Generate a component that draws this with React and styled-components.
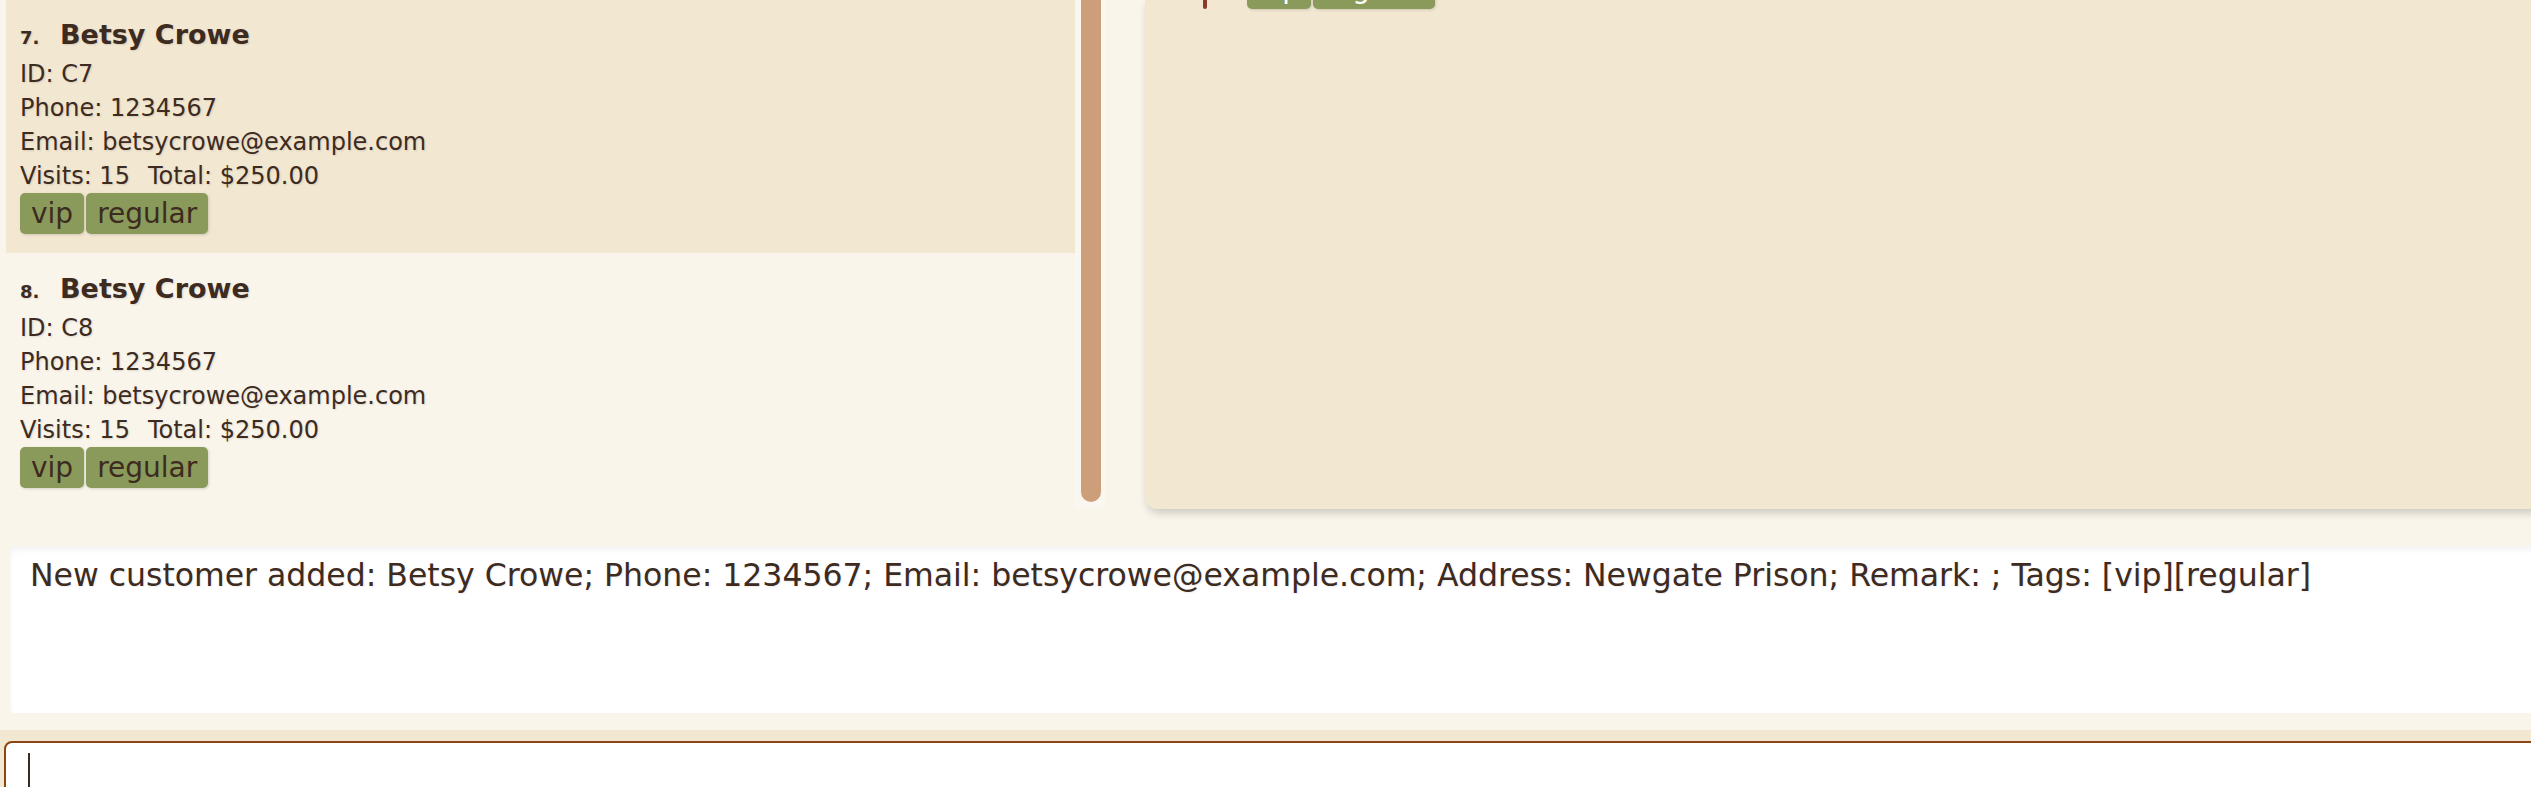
import React from "react";
import styled, { createGlobalStyle } from "styled-components";

const GlobalStyle = createGlobalStyle`
  html, body {
    margin: 0;
    padding: 0;
    background: #f9f5eb;
    overflow: hidden;
  }
  body {
    font-family: "DejaVu Sans", Lato, sans-serif;
    color: #3d2b1f;
  }
`;

const Window = styled.div`
  width: 2531px;
  height: 787px;
  display: flex;
  flex-direction: column;
  overflow: hidden;
  & > * {
    flex-shrink: 0;
  }
`;

const Main = styled.div`
  height: 509px;
  display: flex;
  gap: 40px;
  padding-left: 6px;
`;

const ListPanel = styled.div`
  width: 1099px;
  display: flex;
  flex-shrink: 0;
  overflow: hidden;
`;

const CardList = styled.div`
  width: 1069px;
  display: flex;
  flex-direction: column;
  margin-top: -1px;
`;

const Card = styled.div`
  height: 254px;
  box-sizing: border-box;
  padding: 20px 14px 20px 14px;
  background: ${(p) => (p.$odd ? "#f2e7d1" : "#f9f5eb")};
  display: flex;
  flex-direction: column;
  flex-shrink: 0;
  text-shadow: 1px 1px 2px rgba(0, 0, 0, 0.12);
`;

const Title = styled.div`
  display: flex;
  align-items: baseline;
  line-height: 32px;
  margin-bottom: 3px;
`;

const Index = styled.span`
  font-size: 18px;
  font-weight: 700;
  width: 40px;
`;

const Name = styled.span`
  font-size: 27px;
  font-weight: 700;
`;

const Line = styled.div`
  font-size: 24px;
  line-height: 34px;
  white-space: nowrap;
`;

const Gap = styled.span`
  margin-left: 18px;
`;

const Tags = styled.div`
  display: flex;
  gap: 2px;
`;

const Tag = styled.span`
  height: 41px;
  line-height: 41px;
  padding: 0 11px;
  font-size: 28px;
  border-radius: 5px;
  background: #8a9a5b;
  color: ${(p) => (p.$light ? "#ffffff" : "#3d2b1f")};
  box-shadow: 1px 1px 3px rgba(0, 0, 0, 0.15);
  text-shadow: none;
`;

const Track = styled.div`
  width: 30px;
  height: 509px;
  background: #faf7f0;
  padding-left: 6px;
  box-sizing: border-box;
`;

const Thumb = styled.div`
  width: 20px;
  height: 502px;
  background: #cc9e7a;
  border-radius: 0 0 10px 10px;
`;

const DetailPanel = styled.div`
  flex: 1;
  margin-right: -20px;
  background: #f2e7d1;
  border-radius: 0 0 0 12px;
  box-shadow: 2px 4px 8px rgba(0, 0, 0, 0.18);
  overflow: hidden;
`;

const DetailTags = styled.div`
  display: flex;
  align-items: flex-end;
  gap: 2px;
  margin-top: -32px;
  padding-left: 58px;
`;

const Marker = styled.span`
  width: 4px;
  height: 34px;
  margin-right: 38px;
  border-radius: 2px;
  background: #8b3a2a;
`;

const ResultBox = styled.div`
  margin: 37px -10px 0 10px;
  height: 167px;
  background: #ffffff;
  border-radius: 4px;
  box-shadow: inset 0 4px 6px rgba(0, 0, 0, 0.05);
  padding: 8px 20px;
  box-sizing: border-box;
  font-size: 31.5px;
  line-height: 42px;
  white-space: nowrap;
  text-shadow: 1px 1px 2px rgba(0, 0, 0, 0.08);
`;

const CommandBar = styled.div`
  margin-top: 17px;
  height: 80px;
  background: #f2e7d1;
  padding: 11px 0 0 4px;
`;

const CommandInput = styled.div`
  height: 80px;
  margin-right: -20px;
  border: 2px solid #8b4513;
  border-radius: 8px;
  background: #ffffff;
  padding: 10px 22px;
`;

const Caret = styled.div`
  width: 2px;
  height: 40px;
  background: #3d2b1f;
`;

const customers = [
  { no: 7, id: "C7" },
  { no: 8, id: "C8" },
];

export default function App() {
  return (
    <Window>
      <GlobalStyle />
      <Main>
        <ListPanel>
          <CardList>
            {customers.map((c, i) => (
              <Card key={c.id} $odd={i === 0}>
                <Title>
                  <Index>{c.no}.</Index>
                  <Name>Betsy Crowe</Name>
                </Title>
                <Line>ID: {c.id}</Line>
                <Line>Phone: 1234567</Line>
                <Line>Email: betsycrowe@example.com</Line>
                <Line>
                  Visits: 15<Gap>Total: $250.00</Gap>
                </Line>
                <Tags>
                  <Tag>vip</Tag>
                  <Tag>regular</Tag>
                </Tags>
              </Card>
            ))}
          </CardList>
          <Track>
            <Thumb />
          </Track>
        </ListPanel>
        <DetailPanel>
          <DetailTags>
            <Marker />
            <Tag $light>vip</Tag>
            <Tag $light>regular</Tag>
          </DetailTags>
        </DetailPanel>
      </Main>
      <ResultBox>
        New customer added: Betsy Crowe; Phone: 1234567; Email:
        betsycrowe@example.com; Address: Newgate Prison; Remark: ; Tags:
        [vip][regular]
      </ResultBox>
      <CommandBar>
        <CommandInput>
          <Caret />
        </CommandInput>
      </CommandBar>
    </Window>
  );
}
